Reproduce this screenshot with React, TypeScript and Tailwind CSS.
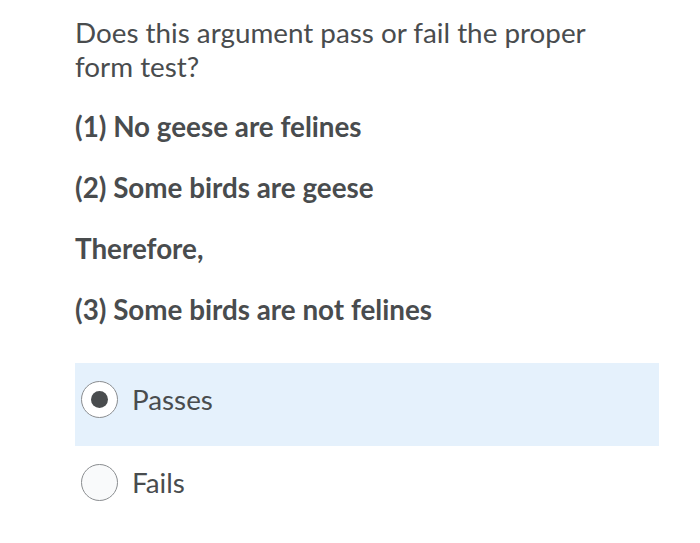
export default function App() {
  return (
    <div className="w-[700px] h-[543px] bg-white text-[#494c4e] pl-[75px] pr-[41px] pt-[16px]" style={{ fontFamily: "Lato, 'Open Sans', sans-serif" }}>
      <p className="text-[27.8px] leading-[34px] pr-[40px]">Does this argument pass or fail the proper form test?</p>
      <div className="mt-[26px] flex flex-col gap-[27px] text-[27.8px] font-bold leading-[34px]">
        <p>(1) No geese are felines</p>
        <p>(2) Some birds are geese</p>
        <p>Therefore,</p>
        <p>(3) Some birds are not felines</p>
      </div>
      <div className="mt-[36px] flex flex-col">
        <label className="h-[83px] bg-[#e5f1fc] flex items-start pt-[18px] pl-[6px]">
          <span className="flex items-center gap-[14px]">
            <span className="w-[37px] h-[37px] rounded-full border-[1.5px] border-[#8a8d90] bg-white flex items-center justify-center">
              <span className="w-[17px] h-[17px] rounded-full bg-[#494c4e]" />
            </span>
            <span className="text-[27.8px] leading-[34px]">Passes</span>
          </span>
        </label>
        <label className="h-[74px] flex items-start pt-[18px] pl-[6px]">
          <span className="flex items-center gap-[14px]">
            <span className="w-[37px] h-[37px] rounded-full border-[1.5px] border-[#8a8d90] bg-[#f9fafb]" />
            <span className="text-[27.8px] leading-[34px]">Fails</span>
          </span>
        </label>
      </div>
    </div>
  );
}
